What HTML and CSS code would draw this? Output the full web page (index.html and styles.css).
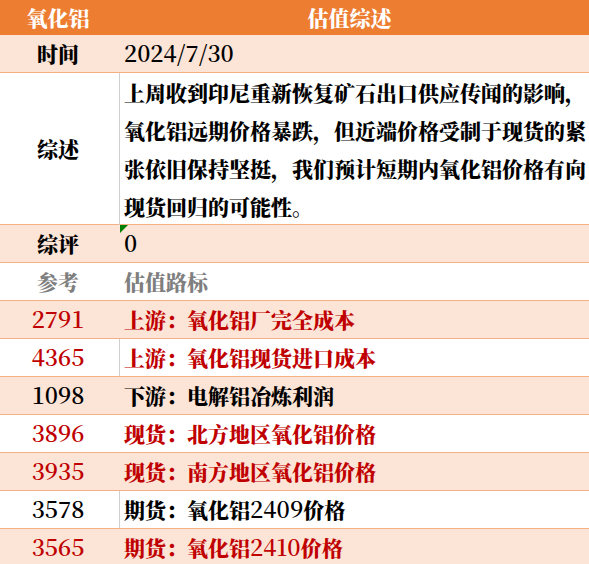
FILE: index.html
```html
<!DOCTYPE html>
<html>
<head>
<meta charset="utf-8">
<title>氧化铝 估值综述</title>
<link rel="stylesheet" href="styles.css">
</head>
<body>
<div class="sheet">
  <div class="row head">
    <div class="c1">氧化铝</div>
    <div class="c2 center">估值综述</div>
  </div>
  <div class="row peach">
    <div class="c1">时间</div>
    <div class="c2"><span class="num solo">2024/7/30</span></div>
  </div>
  <div class="row tall grid">
    <div class="c1">综述</div>
    <div class="c2 para">上周收到印尼重新恢复矿石出口供应传闻的影响，<br>氧化铝远期价格暴跌，但近端价格受制于现货的紧<br>张依旧保持坚挺，我们预计短期内氧化铝价格有向<br>现货回归的可能性。</div>
  </div>
  <div class="row peach">
    <div class="c1">综评</div>
    <div class="c2 flag"><span class="num solo">0</span></div>
  </div>
  <div class="row gray">
    <div class="c1">参考</div>
    <div class="c2">估值路标</div>
  </div>
  <div class="row peach red">
    <div class="c1 num solo">2791</div>
    <div class="c2">上游：氧化铝厂完全成本</div>
  </div>
  <div class="row red grid">
    <div class="c1 num solo">4365</div>
    <div class="c2">上游：氧化铝现货进口成本</div>
  </div>
  <div class="row peach">
    <div class="c1 num solo">1098</div>
    <div class="c2">下游：电解铝冶炼利润</div>
  </div>
  <div class="row red">
    <div class="c1 num solo">3896</div>
    <div class="c2">现货：北方地区氧化铝价格</div>
  </div>
  <div class="row peach red">
    <div class="c1 num solo">3935</div>
    <div class="c2">现货：南方地区氧化铝价格</div>
  </div>
  <div class="row grid">
    <div class="c1 num solo">3578</div>
    <div class="c2"><span>期货：氧化铝<span class="num">2409</span>价格</span></div>
  </div>
  <div class="row peach red">
    <div class="c1 num solo">3565</div>
    <div class="c2"><span>期货：氧化铝<span class="num">2410</span>价格</span></div>
  </div>
</div>
</body>
</html>
```

FILE: styles.css
```css
html, body {
  margin: 0;
  padding: 0;
  background: #ffffff;
}

.sheet {
  width: 589px;
  font-family: "Noto Serif CJK SC", "Noto Sans CJK SC", serif;
  font-weight: 900;
  font-size: 21px;
  color: #000000;
}

.row {
  display: grid;
  grid-template-columns: 119px 1fr;
  height: 37px;
  border-bottom: 1px solid #F4B183;
  background: #ffffff;
}

.row.head {
  height: 35px;
  border-bottom: none;
  background: #ED7D31;
  color: #ffffff;
}

.row.peach {
  background: #FCE4D6;
}

.row.tall {
  height: 151px;
}

.row.red {
  color: #C00000;
}

.row.gray {
  color: #7F7F7F;
}

.c1 {
  display: flex;
  align-items: center;
  justify-content: center;
  padding-right: 3px;
  padding-bottom: 2px;
}

.c2 {
  display: flex;
  align-items: center;
  padding-left: 4px;
  padding-bottom: 2px;
  border-left: 1px solid transparent;
  white-space: nowrap;
  position: relative;
}

.row.grid .c2 {
  border-left-color: #D0D0D0;
}

.c2.center {
  justify-content: center;
  padding-left: 0;
  padding-right: 10px;
}

.c2.para {
  display: block;
  line-height: 38px;
  padding-bottom: 0;
}

.num {
  font-family: "Noto Serif CJK SC", serif;
  font-weight: 600;
  font-size: 23px;
}

.c1.solo {
  padding-bottom: 3px;
}

.flag::before {
  content: "";
  position: absolute;
  left: 0;
  top: 0;
  width: 0;
  height: 0;
  border-top: 8px solid #008000;
  border-right: 8px solid transparent;
}
```
